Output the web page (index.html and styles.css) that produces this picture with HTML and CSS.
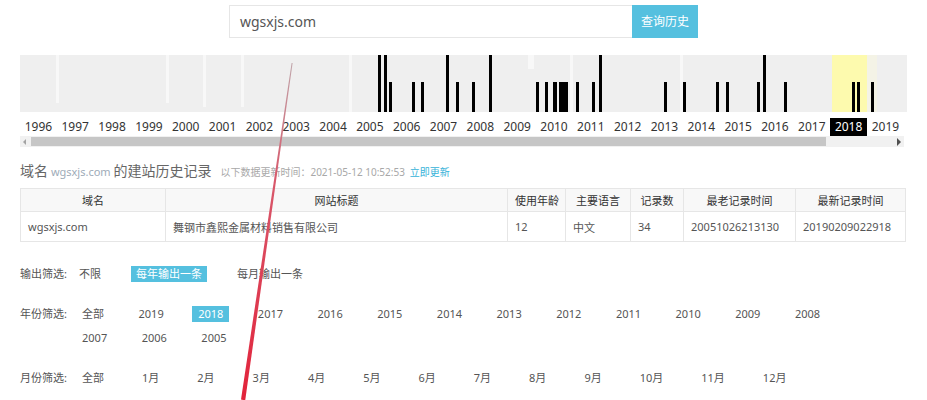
FILE: index.html
```html
<!DOCTYPE html>
<html lang="zh-CN">

<head>
    <meta charset="UTF-8">
    <meta name="viewport" content="width=device-width, initial-scale=1.0">
    <title>建站历史记录</title>
    <link rel="stylesheet" href="styles.css">
</head>

<body>
    <div class="search">
        <div class="search-input">wgsxjs.com</div>
        <div class="search-btn">查询历史</div>
    </div>

    <div class="page">
        <!-- 时间轴柱状图 -->
        <div class="chart">
            <svg width="887" height="57" viewBox="0 0 887 57">
                <rect x="0" y="0" width="887" height="57" fill="#efefef" />
                <rect x="812" y="0" width="35" height="57" fill="#fdfaae" />
                <rect x="847" y="0" width="10" height="57" fill="#f4f3e6" />
                <g fill="#f8f8f8">
                    <rect x="36" y="0" width="3" height="48" />
                    <rect x="146" y="0" width="3" height="48" />
                    <rect x="183" y="0" width="3" height="52" />
                    <rect x="221" y="0" width="3" height="52" />
                    <rect x="329" y="0" width="3" height="57" />
                    <rect x="508" y="0" width="6" height="14" />
                    <rect x="550" y="0" width="3" height="57" />
                    <rect x="660" y="0" width="3" height="57" />
                </g>
                <g fill="#000">
                    <rect x="358" y="0" width="3" height="57" />
                    <rect x="364" y="0" width="3" height="57" />
                    <rect x="426" y="0" width="3" height="57" />
                    <rect x="469" y="0" width="3" height="57" />
                    <rect x="579" y="0" width="3" height="57" />
                    <rect x="743" y="0" width="3" height="57" />

                    <rect x="369" y="27" width="3" height="30" />
                    <rect x="392" y="27" width="3" height="30" />
                    <rect x="401" y="27" width="3" height="30" />
                    <rect x="436" y="27" width="3" height="30" />
                    <rect x="452" y="27" width="3" height="30" />
                    <rect x="516" y="27" width="3" height="30" />
                    <rect x="525" y="27" width="3" height="30" />
                    <rect x="533" y="27" width="4" height="30" />
                    <rect x="539" y="27" width="9" height="30" />
                    <rect x="556" y="27" width="3" height="30" />
                    <rect x="572" y="27" width="3" height="30" />
                    <rect x="644" y="27" width="3" height="30" />
                    <rect x="663" y="27" width="3" height="30" />
                    <rect x="696" y="27" width="3" height="30" />
                    <rect x="706" y="27" width="3" height="30" />
                    <rect x="737" y="27" width="3" height="30" />
                    <rect x="764" y="27" width="3" height="30" />
                    <rect x="832" y="27" width="3" height="30" />
                    <rect x="837" y="27" width="3" height="30" />
                    <rect x="851" y="27" width="3" height="30" />
                </g>
            </svg>
        </div>
        <div class="years">
            <span>1996</span><span>1997</span><span>1998</span><span>1999</span>
            <span>2000</span><span>2001</span><span>2002</span><span>2003</span>
            <span>2004</span><span>2005</span><span>2006</span><span>2007</span>
            <span>2008</span><span>2009</span><span>2010</span><span>2011</span>
            <span>2012</span><span>2013</span><span>2014</span><span>2015</span>
            <span>2016</span><span>2017</span><span class="current">2018</span><span>2019</span>
        </div>
        <div class="scroll">
            <div class="scroll-btn left"></div>
            <div class="scroll-track">
                <div class="scroll-thumb"></div>
            </div>
            <div class="scroll-btn right"></div>
        </div>

        <div class="title">
            <span class="title-label">域名</span>
            <span class="title-domain">wgsxjs.com</span>
            <span class="title-main">的建站历史记录</span>
            <span class="title-time">以下数据更新时间：2021-05-12 10:52:53</span>
            <a class="title-update">立即更新</a>
        </div>

        <table class="records">
            <thead>
                <tr>
                    <th class="c-domain">域名</th>
                    <th class="c-title">网站标题</th>
                    <th class="c-age">使用年龄</th>
                    <th class="c-lang">主要语言</th>
                    <th class="c-count">记录数</th>
                    <th class="c-old">最老记录时间</th>
                    <th class="c-new">最新记录时间</th>
                </tr>
            </thead>
            <tbody>
                <tr>
                    <td>wgsxjs.com</td>
                    <td>舞钢市鑫熙金属材料销售有限公司</td>
                    <td>12</td>
                    <td>中文</td>
                    <td>34</td>
                    <td>20051026213130</td>
                    <td>20190209022918</td>
                </tr>
            </tbody>
        </table>

        <div class="filter">
            <div class="filter-label">输出筛选:</div>
            <div class="options out">
                <a>不限</a>
                <a class="active">每年输出一条</a>
                <a>每月输出一条</a>
            </div>
        </div>

        <div class="filter">
            <div class="filter-label">年份筛选:</div>
            <div class="options year">
                <a>全部</a>
                <a>2019</a>
                <a class="active">2018</a>
                <a>2017</a>
                <a>2016</a>
                <a>2015</a>
                <a>2014</a>
                <a>2013</a>
                <a>2012</a>
                <a>2011</a>
                <a>2010</a>
                <a>2009</a>
                <a>2008</a>
                <a>2007</a>
                <a>2006</a>
                <a>2005</a>
            </div>
        </div>

        <div class="filter">
            <div class="filter-label">月份筛选:</div>
            <div class="options month">
                <a>全部</a>
                <a>1月</a>
                <a>2月</a>
                <a>3月</a>
                <a>4月</a>
                <a>5月</a>
                <a>6月</a>
                <a>7月</a>
                <a>8月</a>
                <a>9月</a>
                <a>10月</a>
                <a>11月</a>
                <a>12月</a>
            </div>
        </div>
    </div>

    <!-- 截图上的红色标注箭头 -->
    <svg class="mark" width="927" height="400" viewBox="0 0 927 400">
        <defs>
            <linearGradient id="markGrad" x1="0" y1="0" x2="0" y2="1">
                <stop offset="0" stop-color="#bfa3a8" />
                <stop offset="0.35" stop-color="#d8586b" />
                <stop offset="1" stop-color="#e2223a" />
            </linearGradient>
        </defs>
        <polygon points="291.6,63 292.6,63 245.2,400.4 241,399.6" fill="url(#markGrad)" />
    </svg>
</body>

</html>
```

FILE: styles.css
```css
body {
    font-family: "Noto Sans", "Noto Sans CJK SC", sans-serif;
    margin: 0;
    padding: 0;
    background: #fff;
    color: #555;
    font-size: 11px;
    position: relative;
    overflow: hidden;
    height: 400px;
}

a {
    text-decoration: none;
    cursor: pointer;
}

.search {
    display: flex;
    justify-content: center;
    padding-top: 5px;
}

.search-input {
    width: 392px;
    height: 31px;
    line-height: 31px;
    padding-left: 10px;
    border: 1px solid #e6e6e6;
    border-right: none;
    font-size: 14px;
    color: #555;
    background: #fff;
}

.search-btn {
    width: 66px;
    height: 33px;
    line-height: 33px;
    text-align: center;
    background: #55c0df;
    color: #fff;
    font-size: 12px;
}

.page {
    padding: 0 20px;
    width: 887px;
}

.chart {
    margin-top: 17px;
    height: 57px;
}

.chart svg {
    display: block;
}

.years {
    display: flex;
    margin-top: 6px;
    width: 884px;
}

.years span {
    flex: 1;
    text-align: center;
    height: 18px;
    line-height: 18px;
    font-size: 12px;
    color: #333;
}

.years .current {
    background: #000;
    color: #fff;
}

.scroll {
    display: flex;
    align-items: center;
    height: 11px;
    background: #f1f1f1;
    width: 884px;
}

.scroll-btn {
    width: 11px;
    height: 11px;
    position: relative;
}

.scroll-btn.left::after {
    content: '';
    position: absolute;
    left: 3px;
    top: 3px;
    border-right: 3px solid #a3a3a3;
    border-top: 3px solid transparent;
    border-bottom: 3px solid transparent;
}

.scroll-btn.right::after {
    content: '';
    position: absolute;
    left: 4px;
    top: 2px;
    border-left: 4px solid #505050;
    border-top: 4px solid transparent;
    border-bottom: 4px solid transparent;
}

.scroll-track {
    flex: 1;
    height: 11px;
    display: flex;
    align-items: center;
}

.scroll-thumb {
    width: 795px;
    height: 9px;
    background: #c6c6c6;
}

.title {
    margin-top: 14px;
    height: 20px;
    line-height: 20px;
    white-space: nowrap;
}

.title-label,
.title-main {
    font-size: 14px;
    color: #666;
}

.title-domain {
    font-size: 11px;
    color: #9eabb8;
}

.title-time {
    font-size: 10px;
    color: #a8a8a8;
    margin-left: 6px;
}

.title-update {
    font-size: 10px;
    color: #35b3d9;
    margin-left: 2px;
}

.records {
    margin-top: 7px;
    width: 885px;
    border-collapse: collapse;
    table-layout: fixed;
    font-size: 11px;
}

.records th,
.records td {
    box-sizing: border-box;
    border: 1px solid #e6e6e6;
    padding: 0 7px;
    white-space: nowrap;
    overflow: hidden;
}

.records th {
    height: 23px;
    background: #f8f8f8;
    color: #333;
    font-weight: normal;
    text-align: center;
}

.records td {
    height: 30px;
    color: #555;
    text-align: left;
}

.c-domain { width: 145px; }
.c-title { width: 342px; }
.c-age { width: 58px; }
.c-lang { width: 65px; }
.c-count { width: 53px; }
.c-old { width: 112px; }
.c-new { width: 110px; }

.filter {
    display: flex;
    margin-top: 24px;
    line-height: 16px;
}

.filter-label {
    width: 56px;
    flex-shrink: 0;
    color: #555;
}

.options {
    display: flex;
    flex-wrap: wrap;
    row-gap: 8px;
    width: 800px;
}

.options a {
    padding: 0 6px;
    color: #555;
}

.options.out a {
    margin-right: 25px;
    padding: 0 5px;
}

.options.out {
    margin-left: -2px;
}

.options.year a {
    margin-right: 22.5px;
}

.options.month a {
    margin-right: 26px;
}

.options a.active {
    background: #55c0df;
    color: #fff;
}

.mark {
    position: absolute;
    top: 0;
    left: 0;
    pointer-events: none;
}
```
